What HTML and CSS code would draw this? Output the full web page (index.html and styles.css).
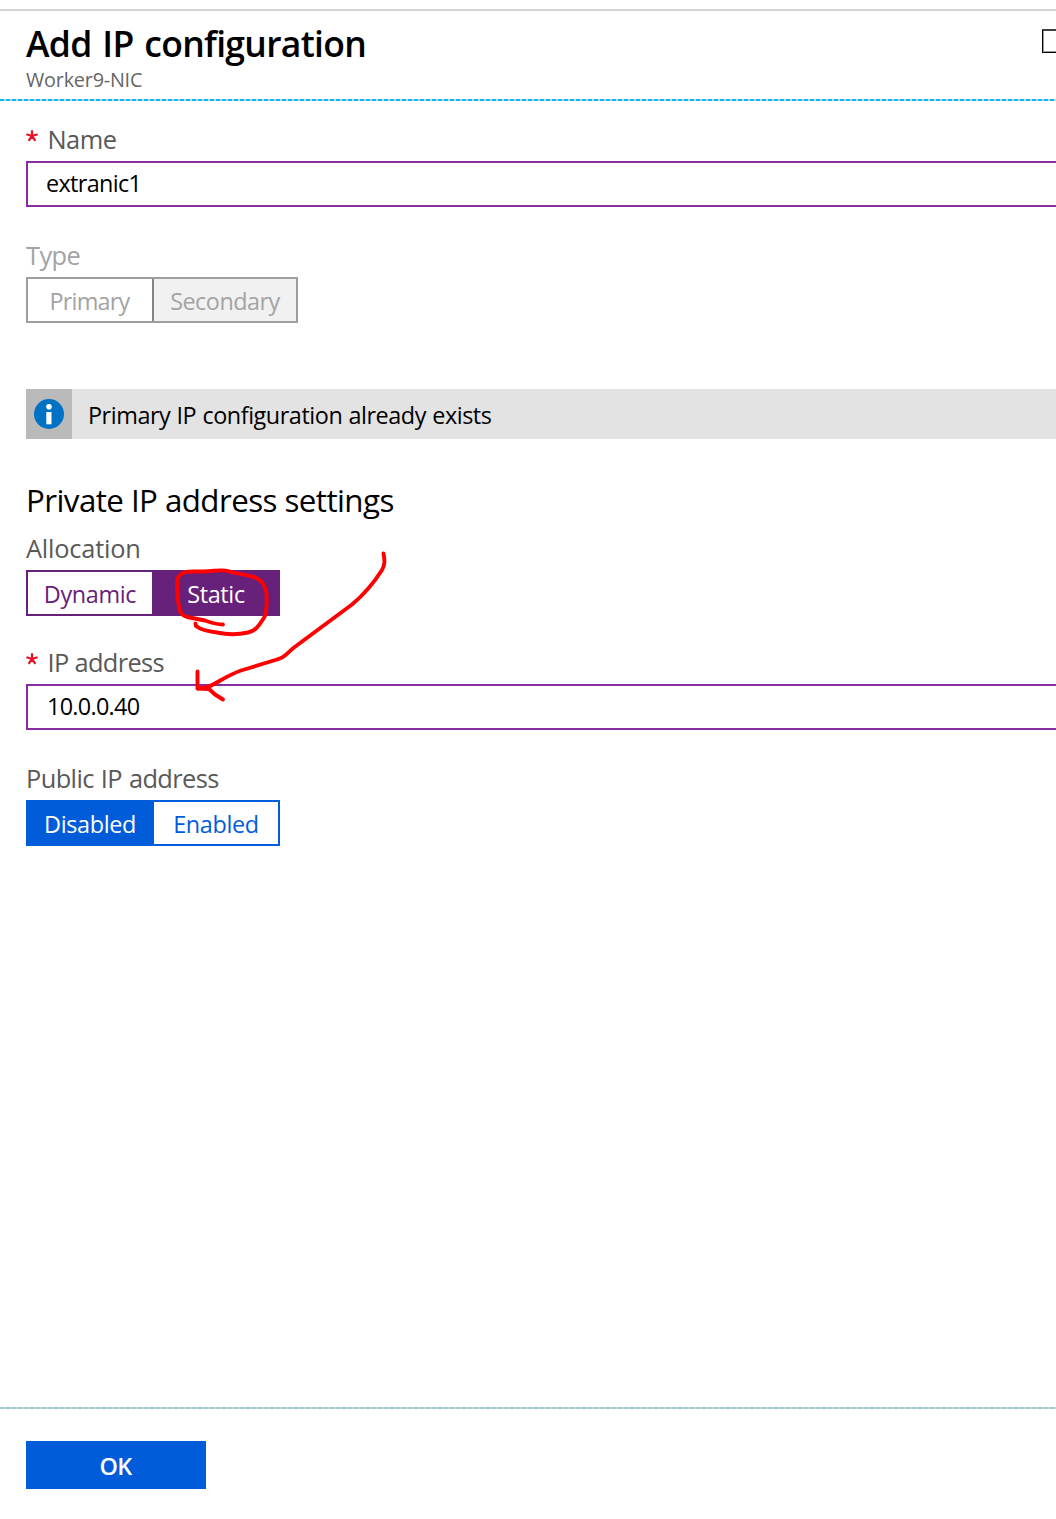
FILE: index.html
```html
<!DOCTYPE html>
<html lang="en">
<head>
<meta charset="utf-8">
<title>Add IP configuration</title>
<link rel="stylesheet" href="styles.css">
</head>
<body>
<div class="blade">
  <header class="blade-header">
    <div class="titles">
      <h1 class="title">Add IP configuration</h1>
      <p class="subtitle">Worker9-NIC</p>
    </div>
    <span class="maximize"></span>
  </header>
  <div class="dash dash-bright"></div>

  <main class="content">
    <section class="field">
      <div class="label label-name"><svg class="required" viewBox="0 0 12 12"><path d="M6 6V.2M6 6L.4 4.3M6 6L11.6 4.3M6 6L2.6 10.8M6 6L9.4 10.8"/></svg>Name</div>
      <div class="input input-name">extranic1</div>
    </section>

    <section class="field field-type">
      <div class="label label-type">Type</div>
      <div class="toggle toggle-disabled">
        <span class="option option-primary">Primary</span>
        <span class="option option-secondary">Secondary</span>
      </div>
    </section>

    <div class="info">
      <div class="info-icon"><svg width="30" height="30" viewBox="0 0 30 30"><circle cx="15" cy="15" r="15" fill="#0072c6"/><circle cx="15" cy="7.8" r="2.8" fill="#fff"/><path d="M12.3 13h5.2v12.3h-5.2z" fill="#fff"/></svg></div>
      <div class="info-text">Primary IP configuration already exists</div>
    </div>

    <h2 class="heading">Private IP address settings</h2>

    <section class="field field-allocation">
      <div class="label label-allocation">Allocation</div>
      <div class="toggle toggle-purple">
        <span class="option">Dynamic</span>
        <span class="option selected">Static</span>
      </div>
    </section>

    <section class="field field-ip">
      <div class="label label-ip"><svg class="required" viewBox="0 0 12 12"><path d="M6 6V.2M6 6L.4 4.3M6 6L11.6 4.3M6 6L2.6 10.8M6 6L9.4 10.8"/></svg>IP address</div>
      <div class="input input-ip">10.0.0.40</div>
    </section>

    <section class="field field-public">
      <div class="label label-public">Public IP address</div>
      <div class="toggle toggle-blue">
        <span class="option selected">Disabled</span>
        <span class="option">Enabled</span>
      </div>
    </section>
  </main>

  <div class="dash dash-pale"></div>
  <footer class="footer"><button class="ok" type="button">OK</button></footer>

  <svg class="ink" width="240" height="170" viewBox="0 0 240 170">
    <path d="M63 84.5C58 84.5 53 83.5 45 80.5L27 77C21 75 20 72 19 67C17 57 17 47 17.500 40C18 36 20 35 24 32.500C28 31 30 31.500 43 31.500C54 31.500 61 29 68 31C75 34 82 33.500 92 36.500C102 39 106 47 106.500 54C107 64 107 71 104.500 77C100 84 96 91 88 92.500C77 95 66 94.500 57 92.500C48 91.500 41 90 36 86L35.500 83.500"/>
    <path d="M223.500 13.500C224.500 20 225.500 23 222 30C215 41 207 52 192 64.500L134 107.500C127 113 125 117.500 117 119.500L81 130.500C66 136 59 142 48 147L38 148.500"/>
    <path d="M37.500 131.500V148.500L49 149L55 154.500L63 159.500"/>
  </svg>
</div>
</body>
</html>
```
FILE: styles.css
```css
* { box-sizing: border-box; }

body {
  margin: 0;
  background: #fff;
  color: #000;
  font-family: "Open Sans", "Noto Sans", sans-serif;
}

h1, h2, p { margin: 0; font-weight: 400; }

.blade {
  position: relative;
  display: flex;
  flex-direction: column;
  height: 1519px;
  padding-top: 9px;
  overflow: hidden;
}

.blade-header {
  display: flex;
  justify-content: space-between;
  height: 90px;
  padding: 7px 0 0 26px;
  border-top: 2px solid #d3d3d3;
}

.title {
  font-size: 35.5px;
  font-weight: 600;
  line-height: 50px;
  letter-spacing: -0.7px;
  word-spacing: 2.2px;
}

.subtitle {
  font-size: 19.8px;
  line-height: 24px;
  letter-spacing: -0.2px;
  color: #666;
}

.maximize {
  width: 14px;
  height: 24px;
  margin-top: 11px;
  border: solid #000;
  border-width: 2px 0 1px 1px;
  border-top-color: #404040;
  box-shadow: inset 1px -1px 0 #999;
}

.dash { flex: none; height: 2px; }
.dash-bright { background: repeating-linear-gradient(90deg, #00bcf2 0 4px, #c8d0d4 4px 6px); }
.dash-pale { background: repeating-linear-gradient(90deg, #98c9d6 0 4px, #ccd0d2 4px 6px); }

.content {
  flex: 1;
  padding: 20px 0 0 26px;
}

.label {
  display: flex;
  height: 40px;
  font-size: 25.4px;
  line-height: 37px;
  color: #595959;
}

.required {
  width: 12px;
  height: 12px;
  margin: 9px 9.5px 0 0;
  fill: none;
  stroke: #e81123;
  stroke-width: 2.2;
}

.label-name { letter-spacing: -0.5px; }
.label-type { letter-spacing: -0.6px; color: #a3a3a3; }
.label-allocation { letter-spacing: -0.2px; }
.label-ip { letter-spacing: -0.65px; }
.label-public { letter-spacing: -0.6px; word-spacing: 1px; }

.input {
  height: 46px;
  padding-left: 18px;
  border: 2px solid #882da1;
  border-right: 0;
  font-size: 23.4px;
  line-height: 41px;
}

.input-name { letter-spacing: -0.65px; }
.input-ip { letter-spacing: -0.7px; padding-left: 19px; }

.field-type, .field-public { margin-top: 30px; }
.field-allocation { margin-top: 9px; }
.field-ip { margin-top: 28px; }

.toggle {
  display: flex;
  width: 254px;
  height: 46px;
  border: 2px solid;
  font-size: 23.4px;
  line-height: 45px;
  text-align: center;
  letter-spacing: -0.35px;
}

.toggle .option { flex: 1; }

.toggle-disabled { width: 272px; border-color: #9e9e9e; color: #a3a3a3; }
.toggle-disabled .option-primary { flex: 0 0 124px; padding-right: 1px; letter-spacing: -0.8px; }
.toggle-disabled .option-secondary {
  border-left: 2px solid #858585;
  background: #f1f1f1;
  letter-spacing: -0.5px;
}

.toggle-purple { border-color: #68217a; color: #68217a; }
.toggle-purple .option:first-child { flex: 0 0 124px; }
.toggle-purple .selected { padding-left: 2px; background: #68217a; color: #fff; }

.toggle-blue { border-color: #015cda; color: #015cda; }
.toggle-blue .option:last-child { flex: 0 0 124px; }
.toggle-blue .selected { padding-right: 2px; background: #015cda; color: #fff; }

.info {
  display: flex;
  height: 50px;
  margin-top: 66px;
  background: #e3e3e3;
}

.info-icon {
  width: 46px;
  padding: 10px 8px;
  background: #bababa;
}

.info-icon svg { display: block; }

.info-text {
  padding-left: 16px;
  font-size: 23.4px;
  line-height: 53px;
  letter-spacing: -0.45px;
  word-spacing: 0.6px;
}

.heading {
  margin-top: 40px;
  font-size: 31.3px;
  line-height: 42px;
  letter-spacing: -0.56px;
}

.footer {
  height: 110px;
  padding: 32px 26px 0;
}

.ok {
  display: block;
  width: 180px;
  height: 48px;
  padding: 2px 1px 0 0;
  border: 0;
  background: #015cda;
  color: #fff;
  font: 600 23.4px/46px "Open Sans", "Noto Sans", sans-serif;
  letter-spacing: -0.7px;
}

/* Hand-drawn marker strokes laid over the form */
.ink {
  position: absolute;
  left: 160px;
  top: 540px;
  fill: none;
  stroke: #f00;
  stroke-width: 3.9;
  stroke-linecap: round;
  stroke-linejoin: round;
  pointer-events: none;
}
```
